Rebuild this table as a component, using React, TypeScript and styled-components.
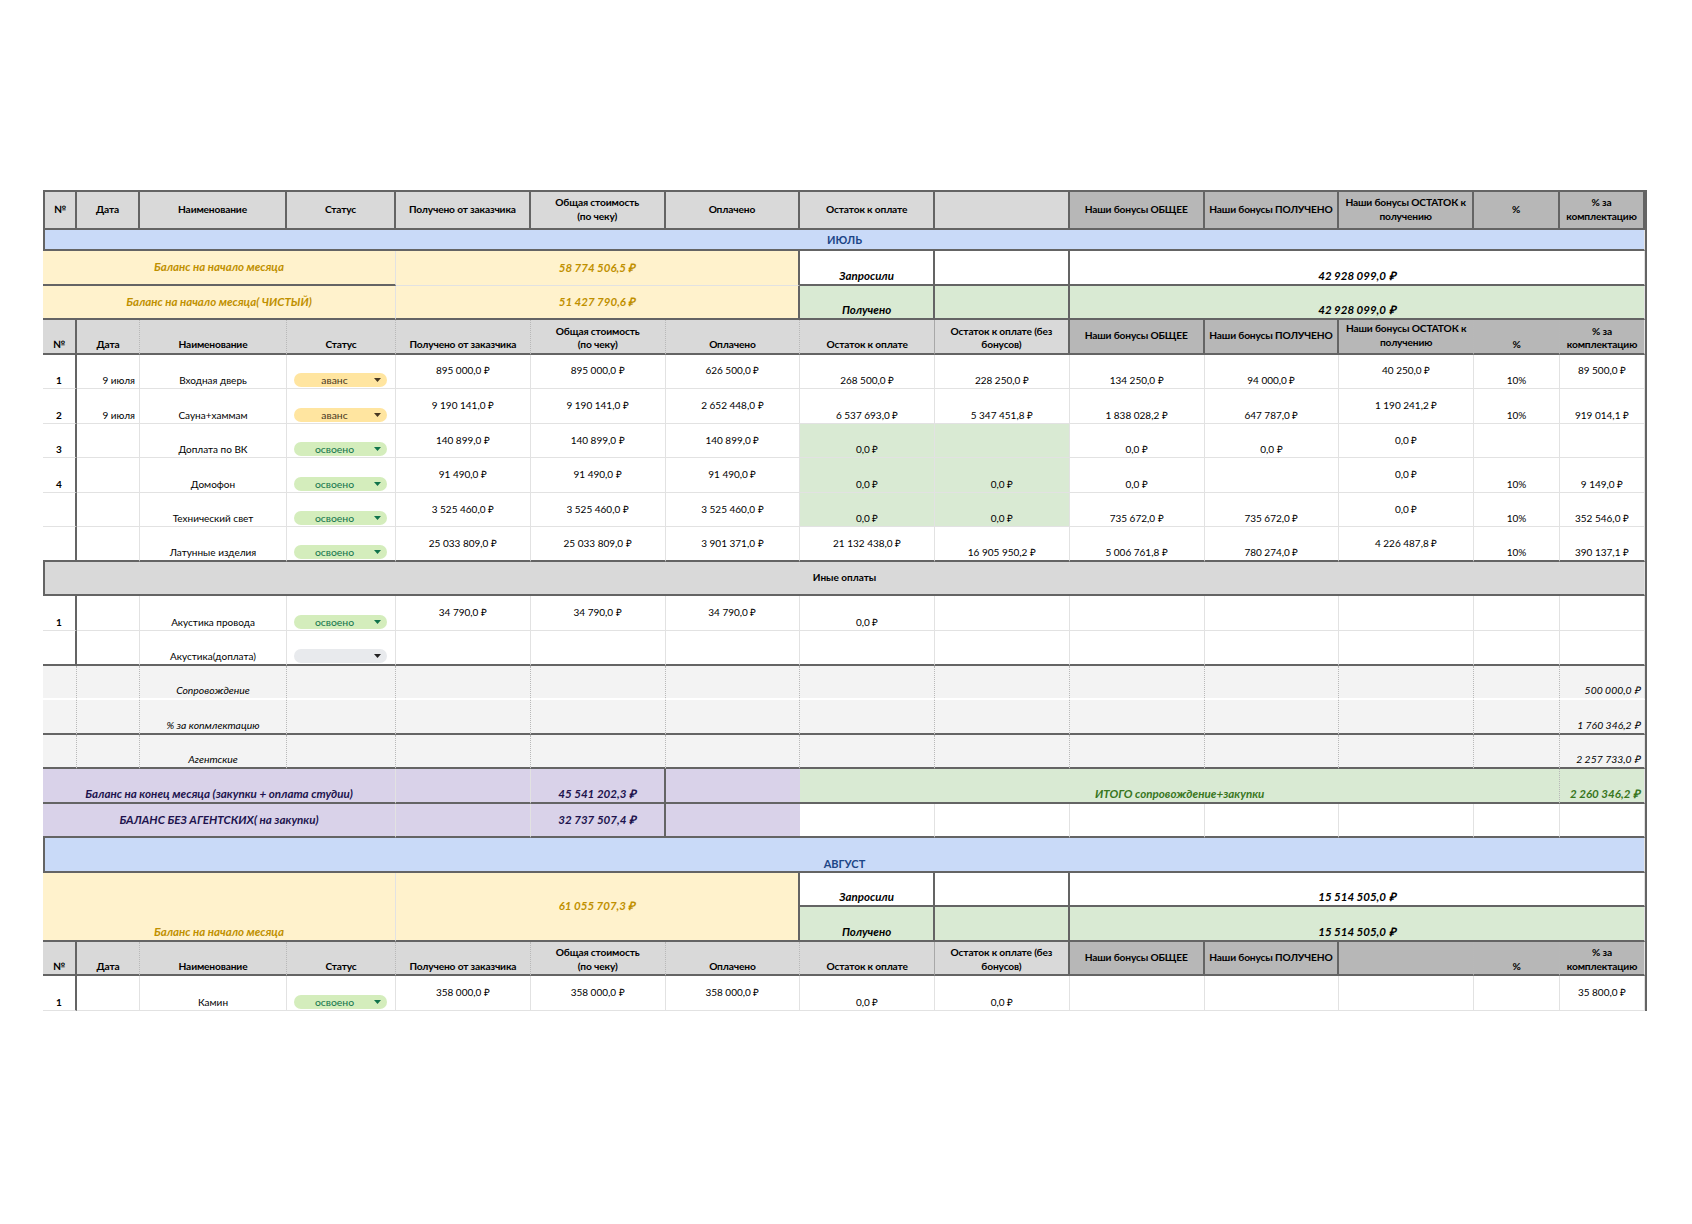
import React from "react";
import styled, { createGlobalStyle } from "styled-components";

const GlobalStyle = createGlobalStyle`
  html, body {
    margin: 0;
    padding: 0;
    background: #ffffff;
  }
  body {
    font-family: Lato, "Open Sans", "Liberation Sans", sans-serif;
    color: #000;
  }
`;

type Line = "thin" | "k" | "dot" | "mid" | "w" | "none";
const lines: Record<Line, string> = {
  thin: "1px solid #e2e2e2",
  k: "2px solid #646464",
  dot: "1px dotted #b8b8b8",
  mid: "1px solid #a8a8a8",
  w: "2px solid #ffffff",
  none: "none",
};

const GREEN = "#d9ead3";
const YELLOW = "#fff2cc";
const PURPLE = "#d9d2e9";
const SOFT = "#f3f3f3";

type CellProps = {
  $span?: number;
  $rows?: number;
  $v?: "m" | "b";
  $h?: "left" | "center" | "right";
  $br?: Line;
  $bb?: Line;
  $bl?: boolean;
  $bg?: string;
};

const Page = styled.div`
  padding: 190px 0 0 43px;
  min-height: 1224px;
  box-sizing: border-box;
`;

const Sheet = styled.div`
  display: grid;
  grid-template-columns: 34px 63px 147px 109px repeat(8, 134.75px) 86px 85px;
  grid-template-rows: 38px 21px repeat(22, 34.55px);
  width: 1604px;
  box-sizing: border-box;
  border-top: 2px solid #646464;
  border-right: 2px solid #646464;
`;

const Cell = styled.div<CellProps>`
  grid-column: span ${(p) => p.$span ?? 1};
  grid-row: span ${(p) => p.$rows ?? 1};
  box-sizing: border-box;
  display: flex;
  flex-direction: column;
  justify-content: ${(p) => (p.$v === "m" ? "center" : "flex-end")};
  text-align: ${(p) => p.$h ?? "center"};
  min-width: 0;
  overflow: hidden;
  white-space: nowrap;
  padding: 0 4px 1px;
  background: ${(p) => p.$bg ?? "#ffffff"};
  border-right: ${(p) => lines[p.$br ?? "thin"]};
  border-bottom: ${(p) => lines[p.$bb ?? "thin"]};
  border-left: ${(p) => (p.$bl ? lines.k : "none")};
  font-size: 10px;
  line-height: 13px;
`;

const Head = styled(Cell)<{ $dark?: boolean }>`
  background: ${(p) => (p.$dark ? "#b7b7b7" : "#d9d9d9")};
  font-weight: 700;
  font-size: 10.2px;
  letter-spacing: -0.15px;
  line-height: 13.5px;
  padding: 0 2px 1px;
`;

const MonthBar = styled(Cell)`
  grid-column: span 14;
  background: #c9daf8;
  color: #1c4587;
  font-weight: 700;
  font-size: 11px;
`;

const Balance = styled(Cell)`
  background: ${YELLOW};
  color: #bf9000;
  font-weight: 700;
  font-style: italic;
  font-size: 11.5px;
  line-height: 15px;
`;

const Mark = styled(Cell)`
  font-weight: 700;
  font-style: italic;
  font-size: 11.5px;
  line-height: 15px;
`;

const Purple = styled(Cell)`
  background: ${PURPLE};
  color: #20124d;
  font-weight: 700;
  font-style: italic;
  font-size: 11.6px;
  line-height: 15px;
`;

const Total = styled(Cell)`
  background: ${GREEN};
  color: #38761d;
  font-weight: 700;
  font-style: italic;
  font-size: 11.6px;
  line-height: 15px;
`;

const Section = styled(Cell)`
  grid-column: span 14;
  background: #d9d9d9;
  font-weight: 700;
`;

const Num = styled(Cell)`
  font-weight: 700;
`;

const Soft = styled(Cell)`
  background: ${SOFT};
  font-style: italic;
  font-size: 10.4px;
`;

const StatusCell = styled(Cell)`
  padding: 0 8px 1px 7px;
`;

type Status = "avans" | "done" | "none";
const chipColors: Record<Status, [string, string]> = {
  avans: ["#ffe5a0", "#473822"],
  done: ["#d4edbc", "#11734b"],
  none: ["#e8eaed", "#222222"],
};

const Chip = styled.div<{ $kind: Status }>`
  display: flex;
  align-items: center;
  height: 14px;
  border-radius: 7px;
  background: ${(p) => chipColors[p.$kind][0]};
  color: ${(p) => chipColors[p.$kind][1]};
  font-size: 10.4px;
  line-height: 14px;
  padding: 0 6px 0 1px;
`;

const ChipLabel = styled.span`
  flex: 1;
  text-align: center;
`;

const Caret = styled.svg`
  width: 7px;
  height: 4px;
  flex: none;
  fill: currentColor;
`;

type Val = [string, "m" | "b", boolean?];
type Item = { n?: string; date?: string; name: string; status: Status; vals: Val[] };

const E: Val = ["", "b"];
const m = (t: string): Val => [t, "m"];
const b = (t: string): Val => [t, "b"];
const g = (t: string): Val => [t, "b", true];

const july: Item[] = [
  {
    n: "1", date: "9 июля", name: "Входная дверь", status: "avans",
    vals: [m("895 000,0 ₽"), m("895 000,0 ₽"), m("626 500,0 ₽"), b("268 500,0 ₽"), b("228 250,0 ₽"),
      b("134 250,0 ₽"), b("94 000,0 ₽"), m("40 250,0 ₽"), b("10%"), m("89 500,0 ₽")],
  },
  {
    n: "2", date: "9 июля", name: "Сауна+хаммам", status: "avans",
    vals: [m("9 190 141,0 ₽"), m("9 190 141,0 ₽"), m("2 652 448,0 ₽"), b("6 537 693,0 ₽"), b("5 347 451,8 ₽"),
      b("1 838 028,2 ₽"), b("647 787,0 ₽"), m("1 190 241,2 ₽"), b("10%"), b("919 014,1 ₽")],
  },
  {
    n: "3", name: "Доплата по ВК", status: "done",
    vals: [m("140 899,0 ₽"), m("140 899,0 ₽"), m("140 899,0 ₽"), g("0,0 ₽"), g(""),
      b("0,0 ₽"), b("0,0 ₽"), m("0,0 ₽"), E, E],
  },
  {
    n: "4", name: "Домофон", status: "done",
    vals: [m("91 490,0 ₽"), m("91 490,0 ₽"), m("91 490,0 ₽"), g("0,0 ₽"), g("0,0 ₽"),
      b("0,0 ₽"), E, m("0,0 ₽"), b("10%"), b("9 149,0 ₽")],
  },
  {
    name: "Технический свет", status: "done",
    vals: [m("3 525 460,0 ₽"), m("3 525 460,0 ₽"), m("3 525 460,0 ₽"), g("0,0 ₽"), g("0,0 ₽"),
      b("735 672,0 ₽"), b("735 672,0 ₽"), m("0,0 ₽"), b("10%"), b("352 546,0 ₽")],
  },
  {
    name: "Латунные изделия", status: "done",
    vals: [m("25 033 809,0 ₽"), m("25 033 809,0 ₽"), m("3 901 371,0 ₽"), m("21 132 438,0 ₽"), b("16 905 950,2 ₽"),
      b("5 006 761,8 ₽"), b("780 274,0 ₽"), m("4 226 487,8 ₽"), b("10%"), b("390 137,1 ₽")],
  },
];

const other: Item[] = [
  {
    n: "1", name: "Акустика провода", status: "done",
    vals: [m("34 790,0 ₽"), m("34 790,0 ₽"), m("34 790,0 ₽"), b("0,0 ₽"), E, E, E, E, E, E],
  },
  { name: "Акустика(доплата)", status: "none", vals: [E, E, E, E, E, E, E, E, E, E] },
];

const august: Item[] = [
  {
    n: "1", name: "Камин", status: "done",
    vals: [m("358 000,0 ₽"), m("358 000,0 ₽"), m("358 000,0 ₽"), b("0,0 ₽"), b("0,0 ₽"),
      E, E, E, E, m("35 800,0 ₽")],
  },
];

const statusText: Record<Status, string> = { avans: "аванс", done: "освоено", none: "" };

function DataRow({ item, last }: { item: Item; last?: boolean }) {
  const bb: Line = last ? "k" : "thin";
  return (
    <>
      <Num $br="k" $bb={bb}>{item.n}</Num>
      <Cell $h="right" $bb={bb}>{item.date}</Cell>
      <Cell $bb={bb}>{item.name}</Cell>
      <StatusCell $bb={bb}>
        <Chip $kind={item.status}>
          <ChipLabel>{statusText[item.status]}</ChipLabel>
          <Caret viewBox="0 0 7 4">
            <path d="M0 0h7L3.5 4z" />
          </Caret>
        </Chip>
      </StatusCell>
      {item.vals.map(([t, v, green], i) => (
        <Cell key={i} $v={v} $bb={bb} $bg={green ? GREEN : undefined}>
          {t}
        </Cell>
      ))}
    </>
  );
}

type HeadDef = { t?: React.ReactNode; dark?: boolean };
const headDefs: HeadDef[] = [
  { t: "№" },
  { t: "Дата" },
  { t: "Наименование" },
  { t: "Статус" },
  { t: "Получено от заказчика" },
  { t: <>Общая стоимость<br />(по чеку)</> },
  { t: "Оплачено" },
  { t: "Остаток к оплате" },
  { t: <>Остаток к оплате (без<br />бонусов)</> },
  { t: "Наши бонусы ОБЩЕЕ", dark: true },
  { t: "Наши бонусы ПОЛУЧЕНО", dark: true },
  { t: <>Наши бонусы ОСТАТОК к<br />получению</>, dark: true },
  { t: "%", dark: true },
  { t: <>% за<br />комплектацию</>, dark: true },
];

const subV: ("m" | "b")[] = ["b", "b", "b", "b", "b", "b", "b", "b", "b", "m", "m", "m", "b", "b"];
const subBr: Line[] = ["k", "dot", "dot", "dot", "dot", "dot", "dot", "mid", "k", "k", "k", "dot", "dot", "thin"];

function TopHeader() {
  return (
    <>
      {headDefs.map((h, i) => (
        <Head key={i} $dark={h.dark} $v="m" $br="k" $bb="k" $bl={i === 0}>
          {i === 8 ? null : h.t}
        </Head>
      ))}
    </>
  );
}

function SubHeader({ skip }: { skip?: number }) {
  return (
    <>
      {headDefs.map((h, i) => (
        <Head key={i} $dark={h.dark} $v={subV[i]} $br={subBr[i]} $bb="k">
          {i === skip ? null : h.t}
        </Head>
      ))}
    </>
  );
}

function BalanceBlock({ asked, got }: { asked: string; got: string }) {
  return (
    <>
      <Mark $br="k" $bb="k">Запросили</Mark>
      <Cell $br="k" $bb="k" />
      <Mark $span={5} $bb="k">{asked}</Mark>
      <Mark $br="k" $bb="k" $bg={GREEN}>Получено</Mark>
      <Cell $br="k" $bb="k" $bg={GREEN} />
      <Mark $span={5} $bb="k" $bg={GREEN}>{got}</Mark>
    </>
  );
}

const extras: { name: string; value: string; bb: Line }[] = [
  { name: "Сопровождение", value: "500 000,0 ₽", bb: "w" },
  { name: "% за копмлектацию", value: "1 760 346,2 ₽", bb: "k" },
  { name: "Агентские", value: "2 257 733,0 ₽", bb: "k" },
];

function ExtraRow({ name, value, bb }: { name: string; value: string; bb: Line }) {
  return (
    <>
      <Soft $br="dot" $bb={bb} />
      <Soft $br="dot" $bb={bb} />
      <Soft $br="dot" $bb={bb}>{name}</Soft>
      {Array.from({ length: 10 }, (_, i) => (
        <Soft key={i} $br="dot" $bb={bb} />
      ))}
      <Soft $h="right" $bb={bb}>{value}</Soft>
    </>
  );
}

export default function App() {
  return (
    <Page>
      <GlobalStyle />
      <Sheet>
        <TopHeader />
        <MonthBar $v="m" $bl $bb="k">ИЮЛЬ</MonthBar>

        <Balance $span={4} $v="m" $bb="k">Баланс на начало месяца</Balance>
        <Balance $span={3} $v="m" $br="k">58 774 506,5 ₽</Balance>
        <Mark $br="k" $bb="k">Запросили</Mark>
        <Cell $br="k" $bb="k" />
        <Mark $span={5} $bb="k">42 928 099,0 ₽</Mark>

        <Balance $span={4} $v="m" $bb="k">Баланс на начало месяца( ЧИСТЫЙ)</Balance>
        <Balance $span={3} $v="m" $br="k" $bb="k">51 427 790,6 ₽</Balance>
        <Mark $br="k" $bb="k" $bg={GREEN}>Получено</Mark>
        <Cell $br="k" $bb="k" $bg={GREEN} />
        <Mark $span={5} $bb="k" $bg={GREEN}>42 928 099,0 ₽</Mark>

        <SubHeader />
        {july.map((item, i) => (
          <DataRow key={i} item={item} last={i === july.length - 1} />
        ))}

        <Section $v="m" $bl $bb="k">Иные оплаты</Section>
        {other.map((item, i) => (
          <DataRow key={i} item={item} last={i === other.length - 1} />
        ))}

        {extras.map((x) => (
          <ExtraRow key={x.name} {...x} />
        ))}

        <Purple $span={4} $bb="k">Баланс на конец месяца (закупки + оплата студии)</Purple>
        <Purple $bb="k" />
        <Purple $br="k" $bb="k">45 541 202,3 ₽</Purple>
        <Purple $br="none" $bb="k" />
        <Total $span={6} $br="dot" $bb="k">ИТОГО сопровождение+закупки</Total>
        <Total $h="right" $bb="k">2 260 346,2 ₽</Total>

        <Purple $span={4} $v="m" $bb="k">БАЛАНС БЕЗ АГЕНТСКИХ( на закупки)</Purple>
        <Purple $bb="k" />
        <Purple $v="m" $br="k" $bb="k">32 737 507,4 ₽</Purple>
        <Purple $br="none" $bb="k" />
        {Array.from({ length: 7 }, (_, i) => (
          <Cell key={i} $bb="k" />
        ))}

        <MonthBar $bl $bb="k">АВГУСТ</MonthBar>
        <Balance $span={4} $rows={2} $bb="k">Баланс на начало месяца</Balance>
        <Balance $span={3} $rows={2} $v="m" $br="k" $bb="k">61 055 707,3 ₽</Balance>
        <BalanceBlock asked="15 514 505,0 ₽" got="15 514 505,0 ₽" />

        <SubHeader skip={11} />
        {august.map((item, i) => (
          <DataRow key={i} item={item} />
        ))}
      </Sheet>
    </Page>
  );
}
